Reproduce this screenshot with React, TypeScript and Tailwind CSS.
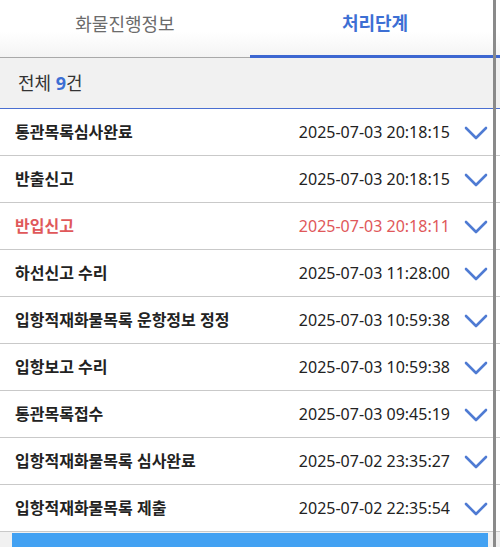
import React from 'react';

interface Step {
    title: string;
    date: string;
    red?: boolean;
}

const steps: Step[] = [
    { title: '통관목록심사완료', date: '2025-07-03 20:18:15' },
    { title: '반출신고', date: '2025-07-03 20:18:15' },
    { title: '반입신고', date: '2025-07-03 20:18:11', red: true },
    { title: '하선신고 수리', date: '2025-07-03 11:28:00' },
    { title: '입항적재화물목록 운항정보 정정', date: '2025-07-03 10:59:38' },
    { title: '입항보고 수리', date: '2025-07-03 10:59:38' },
    { title: '통관목록접수', date: '2025-07-03 09:45:19' },
    { title: '입항적재화물목록 심사완료', date: '2025-07-02 23:35:27' },
    { title: '입항적재화물목록 제출', date: '2025-07-02 22:35:54' },
];

const Chevron = () => (
    <svg width="24" height="16" viewBox="0 0 24 16" className="shrink-0 mt-[2px]">
        <path d="M2 3 L12 13 L22 3" fill="none" stroke="#4f7bd3" strokeWidth="2.6" strokeLinecap="round" strokeLinejoin="round" />
    </svg>
);

const App: React.FC = () => {
    return (
        <div
            className="relative w-[500px] h-[547px] overflow-hidden bg-[#f1f1f1]"
            style={{ fontFamily: '"Noto Sans", "Noto Sans CJK KR", sans-serif' }}
        >
            {/* tabs */}
            <div className="flex h-[58px] bg-gradient-to-b from-white from-55% to-[#f3f3f3]">
                <div className="flex-1 flex items-center justify-center pb-2 border-b border-[#a9a9a9] text-[18px] text-[#6b6b6b]">
                    화물진행정보
                </div>
                <div className="flex-1 flex items-center justify-center pb-2 border-b-[3px] border-[#3d67d1] text-[18px] font-bold text-[#3d6fd4]">
                    처리단계
                </div>
            </div>

            {/* count */}
            <div className="h-[51px] flex items-center px-[18px] bg-[#f1f1f1] border-b border-[#4a6fd1] text-[18px] text-[#333]">
                전체&nbsp;<span className="font-bold text-[#3d6fd4]">9</span>건
            </div>

            {/* list */}
            <div className="bg-white">
                {steps.map((s, i) => (
                    <div
                        key={i}
                        className="h-[47px] flex items-center pl-[15px] pr-[12px] border-b border-[#c9c9c9]"
                    >
                        <span className={`flex-1 text-[16px] font-bold ${s.red ? 'text-[#e0585a]' : 'text-[#222]'}`}>
                            {s.title}
                        </span>
                        <span className={`text-[16px] mr-[14px] ${s.red ? 'text-[#e0585a]' : 'text-[#222]'}`}>
                            {s.date}
                        </span>
                        <Chevron />
                    </div>
                ))}
            </div>

            {/* button */}
            <div className="pt-[1px] px-[12px]">
                <div className="h-[40px] bg-[#42a1f2] w-[476px]" />
            </div>

            {/* scrollbar */}
            <div className="absolute top-0 bottom-0 left-[493px] w-[3px] bg-[#8a8a8a]" />
        </div>
    );
};

export default App;
